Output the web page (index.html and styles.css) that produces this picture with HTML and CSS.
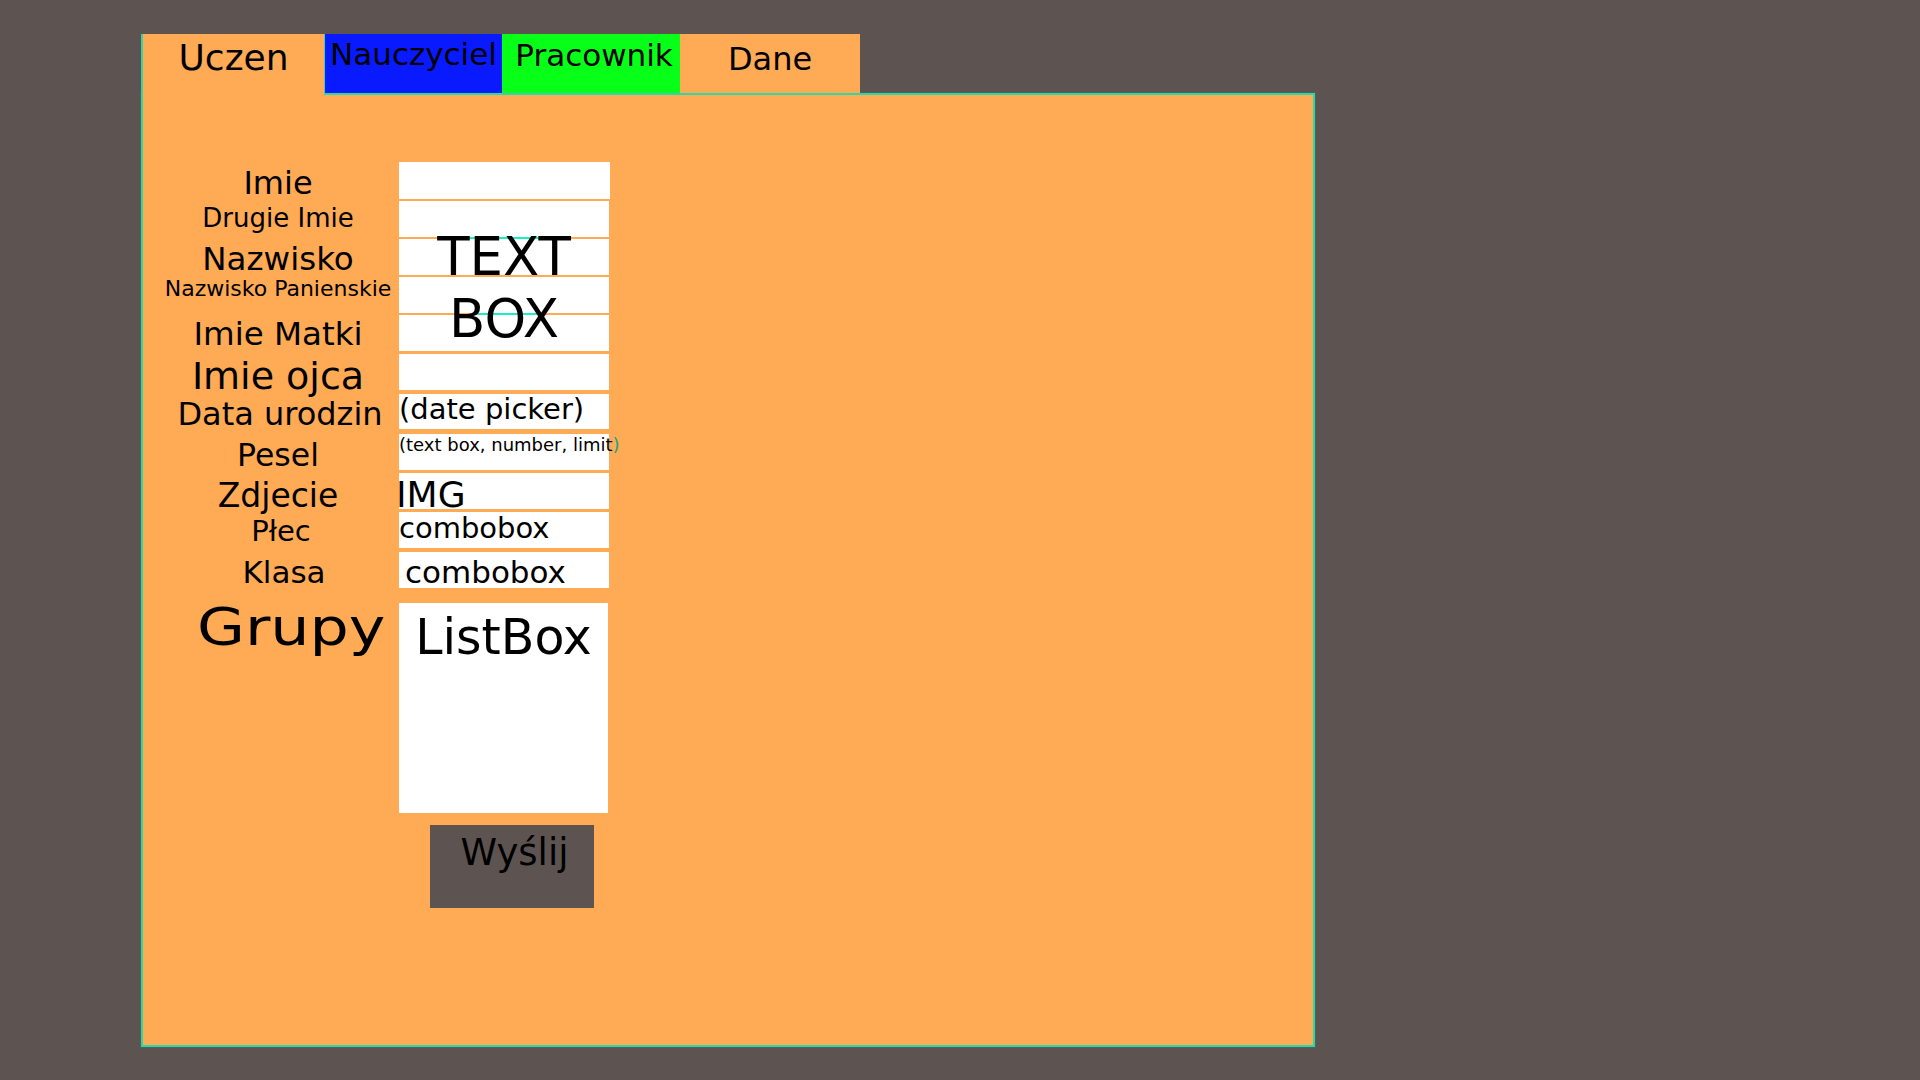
FILE: index.html
```html
<!DOCTYPE html>
<html lang="pl">
<head>
<meta charset="utf-8">
<title>Uczen</title>
<link rel="stylesheet" href="styles.css">
</head>
<body>
<div class="app">
  <div class="tabs">
    <div class="tab tab-uczen">Uczen</div>
    <div class="tab tab-nauczyciel">Nauczyciel</div>
    <div class="tab tab-pracownik">Pracownik</div>
    <div class="tab tab-dane">Dane</div>
  </div>
  <div class="panel">
    <div class="form">
      <div class="labels">
        <div class="label l-imie">Imie</div>
        <div class="label l-drugie">Drugie Imie</div>
        <div class="label l-nazwisko">Nazwisko</div>
        <div class="label l-panienskie">Nazwisko Panienskie</div>
        <div class="label l-matki">Imie Matki</div>
        <div class="label l-ojca">Imie ojca</div>
        <div class="label l-data">Data urodzin</div>
        <div class="label l-pesel">Pesel</div>
        <div class="label l-zdjecie">Zdjecie</div>
        <div class="label l-plec">Płec</div>
        <div class="label l-klasa">Klasa</div>
        <div class="label l-grupy"><span class="grupy-text">Grupy</span></div>
      </div>
      <div class="fields">
        <div class="field f-first"></div>
        <div class="field"></div>
        <div class="field"></div>
        <div class="field"></div>
        <div class="field"></div>
        <div class="field f-ojca"></div>
        <div class="field f-date">(date picker)</div>
        <div class="field f-pesel">(text box, number, limit<span class="paren">)</span></div>
        <div class="field f-img">IMG</div>
        <div class="field f-combo1">combobox</div>
        <div class="field f-combo2">combobox</div>
        <div class="listbox">ListBox</div>
        <div class="send">Wyślij</div>
        <div class="textbox-overlay">
          <span class="glitch g1"></span>
          <span class="glitch g2"></span>
          <div class="overlay-text">TEXT<br>BOX</div>
        </div>
      </div>
    </div>
  </div>
</div>
</body>
</html>
```
FILE: styles.css
```css
html, body {
  margin: 0;
  padding: 0;
}
body {
  background: #5d5452;
  font-family: "DejaVu Sans", "Noto Sans", sans-serif;
  color: #000;
  width: 1920px;
  height: 1080px;
  overflow: hidden;
}
.app {
  padding: 34px 0 0 141px;
}
.tabs {
  display: flex;
  height: 59px;
}
.tab {
  box-sizing: border-box;
  height: 59px;
  font-size: 31px;
  line-height: 1;
  text-align: center;
  white-space: nowrap;
}
.tab-uczen {
  width: 183px;
  height: 61px;
  background: #ffaa55;
  border-left: 2px solid #2fd6a6;
  position: relative;
  z-index: 1;
  font-size: 36px;
  padding-top: 5.5px;
}
.tab-nauczyciel {
  width: 178px;
  background: #0a1aff;
  border-left: 1px solid #2fd6a6;
  padding-top: 4.8px;
}
.tab-pracownik {
  width: 178px;
  background: #08ff18;
  padding-top: 5.8px;
  padding-left: 6px;
}
.tab-dane {
  width: 180px;
  background: #ffaa55;
  font-size: 32px;
  padding-top: 8.9px;
}
.panel {
  box-sizing: border-box;
  width: 1174px;
  height: 954px;
  background: #ffaa55;
  border: 2px solid #2fd6a6;
  box-shadow: 0 0 0 1px rgba(70, 110, 95, 0.55);
  padding: 67px 0 0 14px;
}
.form {
  display: flex;
}
.labels {
  width: 242px;
  display: flex;
  flex-direction: column;
}
.label {
  line-height: 1;
  text-align: center;
  white-space: nowrap;
}
.l-imie { font-size: 32px; margin-top: 4.9px; }
.l-drugie { font-size: 26px; margin-top: 6.1px; }
.l-nazwisko { font-size: 32.5px; margin-top: 12.5px; }
.l-panienskie { font-size: 22px; margin-top: 2.4px; }
.l-matki { font-size: 32.5px; margin-top: 18.1px; }
.l-ojca { font-size: 38px; margin-top: 5.9px; }
.l-data { font-size: 32px; margin-top: 3px; padding-left: 4px; }
.l-pesel { font-size: 31.5px; margin-top: 10.5px; }
.l-zdjecie { font-size: 33px; margin-top: 7.2px; }
.l-plec { font-size: 29px; margin-top: 5.4px; padding-left: 6px; }
.l-klasa { font-size: 31px; margin-top: 10.3px; padding-left: 12px; }
.l-grupy { font-size: 52px; margin-top: 13px; padding-left: 26px; }
.grupy-text {
  display: inline-block;
  transform: scaleX(1.19);
}
.fields {
  width: 210px;
  display: flex;
  flex-direction: column;
  position: relative;
}
.field {
  box-sizing: border-box;
  height: 36px;
  margin-top: 2px;
  background: #fff;
  line-height: 1;
  white-space: nowrap;
}
.f-first { margin-top: 0; height: 37px; width: 211px; }
.f-ojca { margin-top: 3px; }
.f-date {
  margin-top: 4px;
  height: 35px;
  font-size: 29px;
  padding-top: 0.8px;
}
.f-pesel {
  margin-top: 5px;
  font-size: 18px;
  padding-top: 2px;
}
.paren { color: #17a585; }
.f-img {
  margin-top: 3px;
  font-size: 36px;
  padding-top: 3.5px;
  text-indent: -3px;
}
.f-combo1 {
  margin-top: 3px;
  font-size: 29px;
  padding-top: 1.5px;
}
.f-combo2 {
  margin-top: 4px;
  font-size: 31px;
  padding-top: 4.8px;
  padding-left: 6px;
}
.listbox {
  box-sizing: border-box;
  margin-top: 15px;
  width: 209px;
  height: 210px;
  background: #fff;
  font-size: 49px;
  line-height: 1;
  text-align: center;
  padding-top: 10px;
}
.send {
  box-sizing: border-box;
  margin: 12px 0 0 31px;
  width: 164px;
  height: 83px;
  background: #5d5452;
  font-size: 37px;
  line-height: 1;
  text-align: center;
  padding: 9px 0 0 5px;
}
.textbox-overlay {
  position: absolute;
  left: 0;
  top: 0;
  width: 210px;
  height: 230px;
}
.overlay-text {
  position: absolute;
  left: 0;
  top: 63.6px;
  width: 210px;
  font-size: 53px;
  line-height: 62px;
  text-align: center;
}
.glitch {
  position: absolute;
  height: 2px;
  background: #19f0c0;
}
.g1 { top: 75px; left: 71px; width: 100px; }
.g2 { top: 151px; left: 79px; width: 59px; }
```
